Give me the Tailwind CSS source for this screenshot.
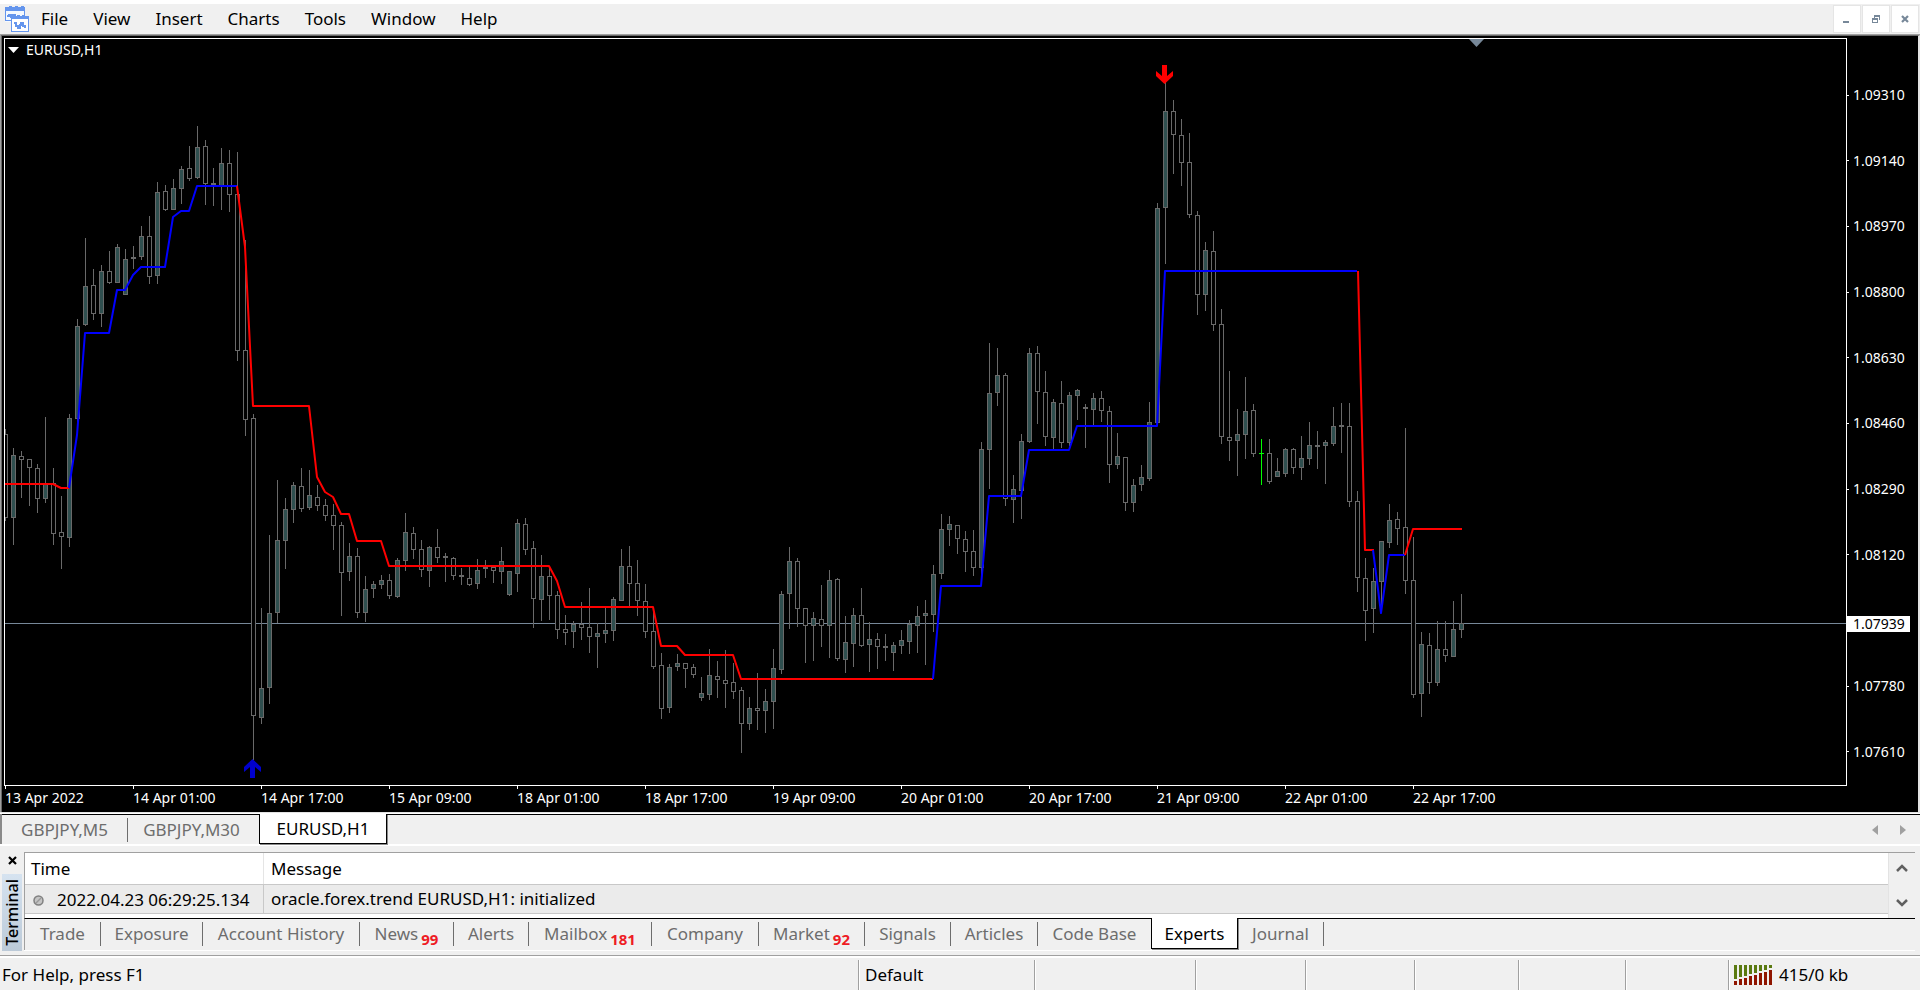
<!DOCTYPE html>
<html lang="en">
<head>
<meta charset="utf-8">
<title>EURUSD,H1</title>
<script src="https://cdn.jsdelivr.net/npm/@tailwindcss/browser@4"></script>
</head>
<body class="h-screen flex flex-col overflow-hidden bg-[#f0f0f0] text-black text-[17px] leading-6 font-['Noto_Sans','Open_Sans',sans-serif]">

<!-- Menu bar -->
<header class="shrink-0 h-[34px] border-t-4 border-white flex items-center">
  <svg class="ml-1 mr-[11px] h-[26px] w-[26px] shrink-0" viewBox="0 0 26 26" fill="none" shape-rendering="crispEdges" aria-hidden="true">
    <rect x="1" y="2" width="20" height="14" fill="#f4f9ff" stroke="none"/>
    <path d="M1 2v12M20 2v8M1 14h6" stroke="#6495ed" stroke-width="1" transform="translate(.5 .5)"/>
    <path d="M2 1h3v-1h3v1h3v-1h3v1h3v-1h3v1h1v4H1V1z" fill="#6495ed"/>
    <path d="M3 10h2v-1h2v2h2V9h3" stroke="#6495ed" stroke-width="2"/>
    <rect x="7.5" y="10.500" width="17" height="15" fill="#fff" stroke="#6495ed"/>
    <path d="M8 9h3v1h2V9h3v1h2V9h3v1h4v3H7V10z" fill="#6495ed"/>
    <path d="M10 17h2v3h2v2h2v-3h1v-2h2v3h2v2" stroke="#6495ed" stroke-width="2"/>
  </svg>
  <nav class="flex-1 flex items-center gap-[25px]" aria-label="Main menu">
    <button>File</button><button>View</button><button>Insert</button><button>Charts</button><button>Tools</button><button>Window</button><button>Help</button>
  </nav>
  <div class="flex gap-px mr-px">
    <button aria-label="Minimize" class="size-7 bg-white border border-[#e5e5e5] flex items-center justify-center">
      <svg width="12" height="12" shape-rendering="crispEdges"><rect x="2" y="8" width="6" height="2" fill="#778899"/></svg></button>
    <button aria-label="Restore" class="size-7 bg-white border border-[#e5e5e5] flex items-center justify-center">
      <svg width="12" height="12" shape-rendering="crispEdges"><path d="M4 2h6v5H9V4H5v1H4zM2 5h6v5H2zM3 7v2h4V7z" fill="#778899" fill-rule="evenodd"/></svg></button>
    <button aria-label="Close" class="size-7 bg-white border border-[#e5e5e5] flex items-center justify-center">
      <svg width="12" height="12"><path d="M3 3l6 6M9 3l-6 6" stroke="#778899" stroke-width="2.200"/></svg></button>
  </div>
</header>

<!-- Chart window -->
<main class="flex-1 min-h-0 border-t border-l border-[#a0a0a0] flex">
  <div class="flex-1 min-w-0 border-t border-l border-[#696969] border-r-2 border-r-[#e3e3e3] bg-black text-white text-sm leading-4 pt-[2px] pl-[2px] flex flex-col">
    <div class="flex-1 min-h-0 flex">
      <div class="relative flex-1 min-w-0 border border-white">
        <svg class="absolute inset-0 h-full w-full" role="img" aria-label="EURUSD one hour candlestick chart">
          <g transform="translate(-5 -39)">
            <rect x="5" y="623" width="100%" height="1" fill="#778899"/>
            <g id="candles" shape-rendering="crispEdges"></g>
            <g fill="none" stroke-width="2" stroke-linejoin="round">
              <path stroke="#f00" d="M5 484H53L61 488H69"/>
              <path stroke="#00f" d="M69 488L77 435L85 333H109L117 290H125L133 275L141 267H165L173 217L181 211H189L197 186H237"/>
              <path stroke="#f00" d="M237 186L245 247L253 406H309L317 477L325 492L333 497L341 514H349L357 541H381L389 566H549L557 581L565 607H653L661 646H677L685 655H733L741 679H933"/>
              <path stroke="#00f" d="M933 679L941 586H981L989 496H1021L1029 450H1069L1077 426H1157L1165 271H1357"/>
              <path stroke="#f00" d="M1358 271L1365 550H1374"/>
              <path stroke="#00f" d="M1373 550L1381 613L1389 555H1405"/>
              <path stroke="#f00" d="M1405 555L1413 529H1462"/>
            </g>
            <path fill="#f00" d="M1162 65h5v11l6-5v5l-8.500 8-8.500-8v-5l6 5z"/>
            <path fill="#0000cd" d="M252.500 759l8.500 8v5l-6-5v11h-5v-11l-6 5v-5z"/>
            <path fill="#778899" d="M1469 39h15l-7.500 8z"/>
          </g>
        </svg>
        <div class="absolute left-[3px] top-[3px] flex items-center gap-[7px]">
          <svg width="11" height="6" aria-hidden="true"><path d="M0 0h11l-5.500 6z" fill="#fff"/></svg>
          <h1>EURUSD,H1</h1>
        </div>
      </div>
      <div class="relative w-[71px] shrink-0">
        <ol class="h-full pt-[49px] pb-[26px] flex flex-col justify-between [&>li]:flex [&>li]:items-center [&>li]:gap-1 [&>li]:before:h-px [&>li]:before:w-[2px] [&>li]:before:bg-white">
          <li>1.09310</li><li>1.09140</li><li>1.08970</li><li>1.08800</li><li>1.08630</li><li>1.08460</li><li>1.08290</li><li>1.08120</li><li class="h-4"></li><li>1.07780</li><li>1.07610</li>
        </ol>
        <div class="absolute left-0 top-[578px] w-[63px] h-4 pl-[6px] bg-white text-black">1.07939</div>
      </div>
    </div>
    <ol class="h-[26px] shrink-0 pl-px flex overflow-hidden [&>li]:w-32 [&>li]:shrink-0 [&>li]:before:block [&>li]:before:h-[3px] [&>li]:before:w-px [&>li]:before:bg-white [&>li]:before:mb-px">
      <li>13 Apr 2022</li><li>14 Apr 01:00</li><li>14 Apr 17:00</li><li>15 Apr 09:00</li><li>18 Apr 01:00</li><li>18 Apr 17:00</li><li>19 Apr 09:00</li><li>20 Apr 01:00</li><li>20 Apr 17:00</li><li>21 Apr 09:00</li><li>22 Apr 01:00</li><li>22 Apr 17:00</li>
    </ol>
  </div>
</main>

<!-- Chart tabs -->
<div class="shrink-0 h-[34px] border-t border-[#e3e3e3] border-b-2 border-b-white flex">
  <div class="flex-1 border-t border-white flex">
    <div class="flex-1 border-l-2 border-l-[#8a8a8a] flex items-start text-[#6d6d6d]" role="tablist" aria-label="Charts">
      <div class="w-[126px] h-[30px] border-t border-black flex items-center"><button role="tab" class="w-full h-6 border-r border-[#6d6d6d]">GBPJPY,M5</button></div>
      <div class="w-[131px] h-[30px] border-t border-black flex items-center"><button role="tab" class="w-full h-6 pr-1">GBPJPY,M30</button></div>
      <button role="tab" aria-selected="true" class="w-32 h-[30px] bg-white text-black border-x border-b border-black shadow-[1px_1px_0_#8a8a8a]">EURUSD,H1</button>
      <div class="flex-1 h-[30px] border-t border-black flex items-center justify-end gap-[22px] pr-[14px]">
        <button aria-label="Scroll tabs left"><svg width="6" height="10"><path d="M6 0v10L0 5z" fill="#a0a0a0"/></svg></button>
        <button aria-label="Scroll tabs right"><svg width="6" height="10"><path d="M0 0v10l6-5z" fill="#a0a0a0"/></svg></button>
      </div>
    </div>
  </div>
</div>

<!-- Terminal -->
<section class="shrink-0 h-[105px] pt-[6px] pr-[5px] flex" aria-label="Terminal">
  <div class="w-6 shrink-0 flex flex-col items-center">
    <button aria-label="Close terminal" class="h-[22px] pt-1 flex items-start"><svg width="9" height="9"><path d="M1 1l7 7M8 1L1 8" stroke="#000" stroke-width="2.200"/></svg></button>
    <div class="h-[77px] w-5 bg-linear-to-b from-[#d6e3f0] to-[#bccad8] flex items-center justify-center">
      <h2 class="text-base font-medium leading-5 [writing-mode:vertical-rl] rotate-180">Terminal</h2>
    </div>
  </div>
  <div class="flex-1 min-w-0 flex flex-col border-b border-white">
    <div class="h-[66px] flex border-t border-l border-[#a0a0a0] bg-white">
      <table class="flex-1 block">
        <thead class="block"><tr class="flex h-8 items-center border-b border-[#c8c8c8]">
          <th class="w-[239px] h-full pl-[6px] pt-1 text-left font-normal border-r border-[#e5e5e5]">Time</th><th class="pl-[7px] pt-1 h-full text-left font-normal">Message</th></tr></thead>
        <tbody class="block"><tr class="flex h-[29px] bg-[#ebebeb] border-b border-[#c8c8c8]">
          <td class="w-[239px] pl-2 pt-[2px] border-r border-[#c8c8c8] flex items-center gap-[13px]">
            <svg width="11" height="11" aria-hidden="true"><circle cx="5.500" cy="5.500" r="4.500" fill="#c4c4c4" stroke="#808080" stroke-width="1.500"/><path d="M3 8l5-5" stroke="#999" stroke-width="1.500"/></svg>2022.04.23 06:29:25.134</td>
          <td class="pl-[7px] pt-[2px]">oracle.forex.trend EURUSD,H1: initialized</td></tr></tbody>
      </table>
      <div class="w-[27px] bg-[#f0f0f0] border-l border-[#e3e3e3] flex flex-col items-center justify-between py-[10px]">
        <button aria-label="Scroll up" class="flex"><svg width="12" height="10"><path d="M1 8l5-5 5 5" fill="none" stroke="#606060" stroke-width="2.500"/></svg></button>
        <button aria-label="Scroll down" class="flex"><svg width="12" height="10"><path d="M1 2l5 5 5-5" fill="none" stroke="#606060" stroke-width="2.500"/></svg></button>
      </div>
    </div>
    <div role="tablist" aria-label="Terminal pages" class="flex text-[#6d6d6d] border-t border-black border-l border-l-[#a0a0a0] h-[32px] [&>button]:h-6 [&>button]:mt-[3px] [&>button]:border-r [&>button]:border-[#6d6d6d] [&>button]:flex [&>button]:justify-center [&>button]:gap-[3px] [&_sub]:bottom-0 [&_sub]:pt-[7px] [&_sub]:text-[15px] [&_sub]:leading-5 [&_sub]:font-bold [&_sub]:text-[#ee1c25]">
      <button role="tab" class="w-[76px]">Trade</button>
      <button role="tab" class="w-[102px]">Exposure</button>
      <button role="tab" class="w-[157px]">Account History</button>
      <button role="tab" class="w-[94px]">News<sub>99</sub></button>
      <button role="tab" class="w-[75px]">Alerts</button>
      <button role="tab" class="w-[123px]">Mailbox<sub>181</sub></button>
      <button role="tab" class="w-[107px]">Company</button>
      <button role="tab" class="w-[106px]">Market<sub>92</sub></button>
      <button role="tab" class="w-[86px]">Signals</button>
      <button role="tab" class="w-[87px]">Articles</button>
      <button role="tab" class="w-[113px] border-r-0!">Code Base</button>
      <button role="tab" aria-selected="true" class="w-[87px] h-[31px]! -mt-px! pt-1 bg-white text-black border-x border-b border-black! shadow-[1px_1px_0_#8a8a8a]">Experts</button>
      <button role="tab" class="w-[86px]">Journal</button>
    </div>
  </div>
</section>

<!-- Status bar -->
<footer class="shrink-0 h-[35px] mt-1 border-t border-[#a0a0a0] flex">
  <div class="flex-1 border-t-2 border-white pt-[2px] flex [&>div]:border-l [&>div]:border-[#a0a0a0] [&>div]:shadow-[inset_1px_0_0_#fff] [&>div]:flex [&>div]:items-center [&>*]:h-[30px]">
    <p class="flex-1 pl-[2px] flex items-center">For Help, press F1</p>
    <div class="w-44 pl-[6px]">Default</div>
    <div class="w-[161px]"></div>
    <div class="w-[110px]"></div>
    <div class="w-[109px]"></div>
    <div class="w-[104px]"></div>
    <div class="w-[107px]"></div>
    <div class="w-[103px]"></div>
    <div class="w-[192px] pl-[5px] gap-[7px]">
      <svg width="38" height="21" shape-rendering="crispEdges" aria-hidden="true">
        <path fill="#5a7a10" d="M0 0h3v14H0zM5 0h3v12H5zM10 0h3v11h-3zM15 0h3v9h-3zM20 0h3v8h-3zM25 0h3v6h-3zM30 0h3v5h-3zM35 0h3v3h-3z"/>
        <path fill="#8f1500" d="M0 16h3v4H0zM5 14h3v6H5zM10 13h3v7h-3zM15 11h3v9h-3zM20 10h3v10h-3zM25 8h3v12h-3zM30 7h3v13h-3zM35 5h3v15h-3z"/>
      </svg>415/0 kb</div>
  </div>
</footer>

<script>
// One entry per hour: high, body top, body bottom, low (y in window pixels),
// then u = filled up candle, d = hollow down candle, g = highlighted doji.
const bars = `429 434 518 521 d|448 455 518 545 u|451 456 460 498 d|459 459 468 506 d|464 468 499 513 d|417 484 499 503 u|468 483 534 545 d|496 532 537 569 d|414 418 538 547 u|319 326 419 424 u
238 286 325 326 u|269 285 314 320 d|265 271 314 327 u|251 271 283 284 d|244 247 283 283 u|249 259 295 295 u|246 257 259 269 d|226 236 257 260 u|216 236 277 284 d|182 192 276 284 u
185 191 210 211 d|179 188 210 210 u|166 169 189 204 u|146 168 179 181 d|126 147 178 179 u|140 146 184 205 d|168 183 185 206 d|148 163 186 210 u|150 163 195 212 d|152 194 351 361 d
240 350 420 436 d|414 418 716 760 d|608 688 718 724 u|535 613 688 704 u|480 540 613 623 u|498 509 541 569 u|482 485 510 523 u|468 486 509 512 d|470 495 508 510 u|485 497 506 511 d
499 505 516 521 d|504 515 526 550 d|522 525 573 616 d|543 556 572 581 u|548 556 613 618 d|576 589 613 622 u|581 584 589 598 u|575 580 585 589 u|574 580 596 599 d|558 560 597 598 u
513 532 561 571 u|527 533 550 559 d|540 549 570 577 d|546 547 571 587 u|529 547 558 563 d|553 556 558 582 d|557 558 576 580 d|568 575 577 585 d|566 578 585 586 d|559 570 584 589 u
560 567 569 578 d|566 567 571 583 d|547 561 572 584 u|571 571 595 596 u|519 523 574 592 u|518 524 550 555 d|541 548 599 628 d|555 576 600 621 u|568 576 596 620 d|591 595 630 639 d
615 629 633 645 d|621 624 632 648 u|602 624 628 640 d|588 627 637 653 d|623 633 637 668 u|607 630 634 643 u|597 599 631 641 u|549 566 601 601 u|546 566 584 607 d|560 583 601 616 d
584 601 632 638 d|607 631 667 669 d|653 665 709 719 d|664 667 708 713 u|654 663 667 671 u|663 663 669 688 d|664 667 675 678 d|677 693 698 701 u|649 675 695 700 u|661 676 680 698 d
650 680 684 708 d|663 682 692 699 d|687 690 724 753 d|697 708 724 730 u|673 708 711 730 d|689 701 711 733 u|649 668 702 729 u|591 594 670 674 u|547 561 594 629 u|558 561 609 627 d
608 608 626 663 d|612 618 626 661 u|585 619 626 647 d|570 580 626 658 u|578 579 659 661 d|616 642 660 673 u|608 615 644 667 u|588 615 646 647 d|622 639 645 672 u|633 639 647 669 d
634 646 648 661 d|642 645 653 671 u|630 640 646 654 u|620 624 642 654 u|606 616 626 653 u|600 613 616 665 u|565 574 615 632 u|514 529 574 579 u|516 524 530 546 u|525 525 539 554 d
531 539 552 572 d|530 551 568 576 d|442 449 568 575 u|343 393 450 489 u|348 375 393 406 u|373 375 499 506 d|475 489 500 523 u|434 441 491 519 u|348 353 442 443 u|346 353 392 424 d
371 392 437 446 d|399 402 438 449 u|381 403 443 448 d|392 395 443 446 u|389 390 396 420 u|404 407 409 448 d|393 398 410 425 u|391 398 411 422 d|406 411 465 483 d|433 456 465 469 u
457 457 503 511 d|479 485 503 512 u|465 477 485 491 u|402 422 479 481 u|203 208 423 423 u|82 111 208 264 u|100 111 135 174 d|119 135 163 186 d|133 162 215 218 d|211 215 295 315 d
242 250 295 311 u|231 251 325 331 d|309 324 437 444 d|371 437 441 461 d|409 434 441 476 u|377 411 435 459 u|404 410 454 457 d|439 453 454 485 g|439 453 482 484 d|458 471 477 477 u
448 449 474 477 u|448 449 468 474 d|436 458 468 480 u|422 445 459 465 u|431 445 447 469 d|440 442 446 484 u|407 426 444 446 u|403 425 427 453 d|403 426 502 507 d|491 501 578 592 d
558 578 611 641 d|568 581 609 633 u|541 541 582 606 u|504 520 543 548 u|512 519 529 545 d|428 527 581 594 d|537 580 695 698 d|632 644 694 717 u|633 645 683 694 d|621 649 683 686 u
621 649 656 662 d|601 629 657 657 u|594 623 630 638 u`.split(/[|\n]/);
const rect = (x, y, w, h, fill) => `<rect x="${x}" y="${y}" width="${w}" height="${h}" fill="${fill}"/>`;
document.getElementById('candles').innerHTML = bars.map((bar, i) => {
  const [high, top, bottom, low, kind] = bar.split(' ').map((v, n) => n < 4 ? +v : v);
  const x = 5 + i * 8, line = kind === 'g' ? '#0f0' : '#696969';
  let out = rect(x, high, 1, low - high, line) + rect(x - 2, top, 5, bottom - top, line);
  if (bottom - top > 2) out += rect(x - 1, top + 1, 3, bottom - top - 2, kind === 'u' ? '#2f4f4f' : '#000');
  return out;
}).join('');
</script>
</body>
</html>
